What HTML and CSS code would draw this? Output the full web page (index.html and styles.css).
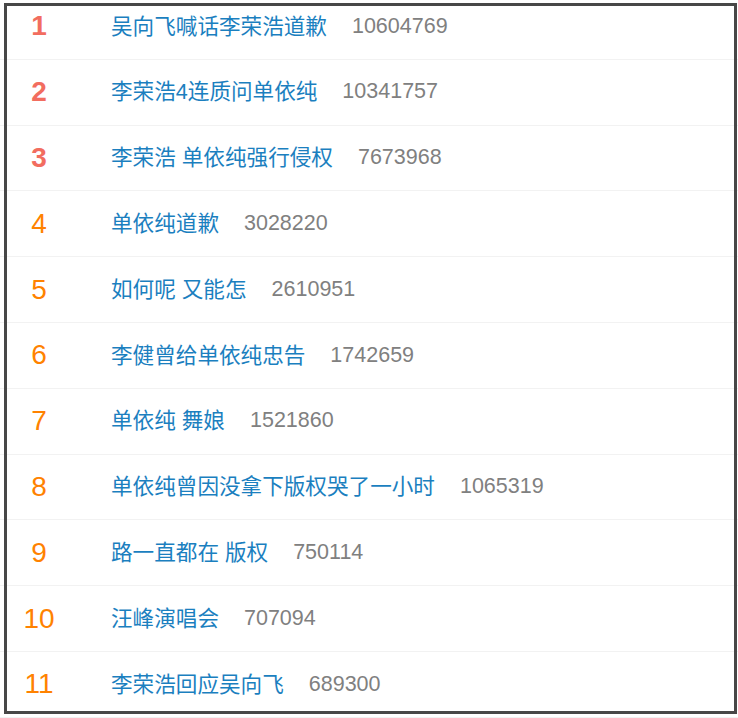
FILE: index.html
```html
<!DOCTYPE html>
<html lang="zh-CN">
<head>
<meta charset="utf-8">
<title>热搜榜</title>
<link rel="stylesheet" href="styles.css">
</head>
<body>
<div class="viewport">
  <ul class="list">
    <li class="row"><span class="rank top">1</span><a class="title">吴向飞喊话李荣浩道歉</a><span class="count">10604769</span></li>
    <li class="row"><span class="rank top">2</span><a class="title">李荣浩4连质问单依纯</a><span class="count">10341757</span></li>
    <li class="row"><span class="rank top">3</span><a class="title">李荣浩 单依纯强行侵权</a><span class="count">7673968</span></li>
    <li class="row"><span class="rank">4</span><a class="title">单依纯道歉</a><span class="count">3028220</span></li>
    <li class="row"><span class="rank">5</span><a class="title">如何呢 又能怎</a><span class="count">2610951</span></li>
    <li class="row"><span class="rank">6</span><a class="title">李健曾给单依纯忠告</a><span class="count">1742659</span></li>
    <li class="row"><span class="rank">7</span><a class="title">单依纯 舞娘</a><span class="count">1521860</span></li>
    <li class="row"><span class="rank">8</span><a class="title">单依纯曾因没拿下版权哭了一小时</a><span class="count">1065319</span></li>
    <li class="row"><span class="rank">9</span><a class="title">路一直都在 版权</a><span class="count">750114</span></li>
    <li class="row"><span class="rank">10</span><a class="title">汪峰演唱会</a><span class="count">707094</span></li>
    <li class="row"><span class="rank">11</span><a class="title">李荣浩回应吴向飞</a><span class="count">689300</span></li>
  </ul>
  <div class="frame"></div>
</div>
</body>
</html>
```
FILE: styles.css
```css
* { box-sizing: border-box; }
html, body {
  margin: 0;
  padding: 0;
  background: #fff;
}
body {
  font-family: "Liberation Sans", Arial, "Noto Sans CJK SC", sans-serif;
  overflow: hidden;
}
.viewport {
  position: relative;
  width: 738px;
  height: 718px;
  overflow: hidden;
}
.list {
  list-style: none;
  margin: -6px 0 0 0;
  padding: 0;
}
.row {
  display: flex;
  align-items: center;
  height: 65.8px;
  border-bottom: 1px solid #f2f2f2;
}
.rank {
  width: 78px;
  flex: none;
  text-align: center;
  font-size: 28px;
  color: #ff8200;
  margin-right: 33px;
  line-height: 1;
}
.rank.top {
  color: #f26d5f;
  font-weight: bold;
}
.title {
  font-size: 21.6px;
  color: #1b7fbf;
  text-decoration: none;
  line-height: 1;
}
.count {
  font-size: 21.5px;
  color: #808080;
  margin-left: 25px;
  line-height: 1;
}
.frame {
  position: absolute;
  left: 4px;
  top: 3px;
  width: 733px;
  height: 711px;
  border: 3px solid #474747;
  pointer-events: none;
}
```
